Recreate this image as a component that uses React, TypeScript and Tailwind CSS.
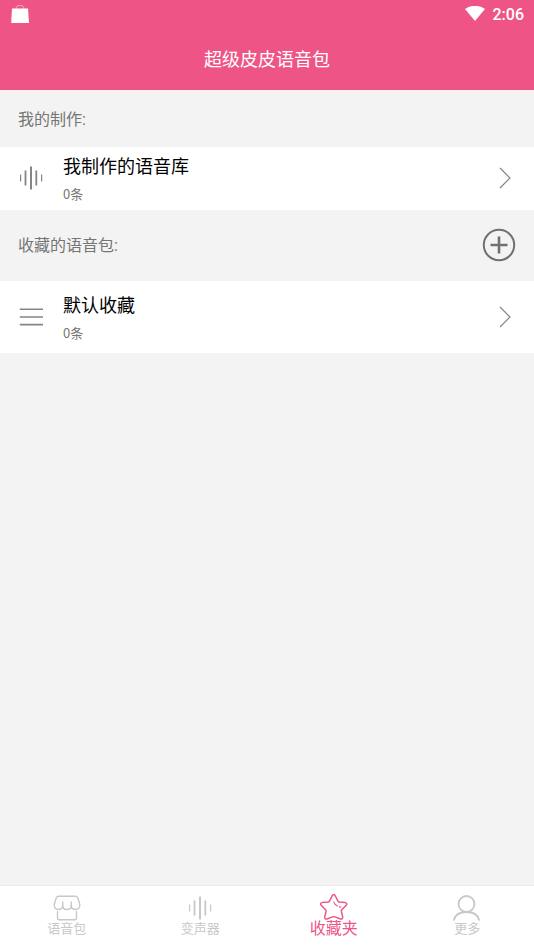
import type { ReactNode } from "react";

function WaveIcon({ className }: { className: string }) {
  return (
    <svg viewBox="0 0 24 24" className={className} fill="none" stroke="currentColor" aria-hidden="true">
      <path strokeWidth="1.2" d="M1.6 8.5v7M22.6 8.5v7" />
      <path strokeWidth="1.8" d="M6.5 4.5v15M17.3 4.5v15" />
      <path strokeWidth="2" d="M12 .5v23" />
    </svg>
  );
}

function ListIcon({ className }: { className: string }) {
  return (
    <svg viewBox="0 0 24 24" className={className} fill="none" stroke="currentColor" strokeWidth="1.6" aria-hidden="true">
      <path d="M.8 4.2H24M.8 12H24M.8 19.6H24" />
    </svg>
  );
}

function ChevronIcon() {
  return (
    <svg viewBox="0 0 12 22" className="h-[22px] w-3 text-[#858585]" fill="none" stroke="currentColor" strokeWidth="1.2" aria-hidden="true">
      <path d="M1 1l10 10L1 21" />
    </svg>
  );
}

function StoreIcon() {
  return (
    <svg viewBox="0 0 28 26" className="h-[26px] w-7" fill="none" stroke="currentColor" strokeWidth="1.4" strokeLinejoin="round" strokeLinecap="round" aria-hidden="true">
      <path d="M5.500 1.200h17c1.200 0 1.800.5 2.200 1.600l2 6.200c.7 2.800-1.200 5.500-4 5.500-2.500 0-4.400-1.600-4.400-4V7M9.700 7v3.500c0 2.400-1.900 4-4.400 4-2.800 0-4.700-2.700-4-5.500l2-6.200c.4-1.100 1-1.600 2.200-1.600" />
      <path d="M9.700 10.500c0 2.500 1.800 4 4.300 4s4.300-1.500 4.300-4M4.500 16.800v6.400c0 1 .5 1.500 1.500 1.500h16c1 0 1.500-.5 1.500-1.500v-6.400" />
    </svg>
  );
}

function StarIcon() {
  return (
    <svg viewBox="0 0 28 28" className="h-7 w-7" fill="none" stroke="currentColor" strokeWidth="1.5" strokeLinejoin="round" aria-hidden="true">
      <path d="M12.300 1.500Q13.700-.5 15.100 1.500L17.800 6.900Q18.200 7.800 19.200 8L25.300 8.600Q27.700 9.300 26.200 11.300L21.800 15.700Q21.200 16.500 21.400 17.500L22.700 22.900Q22.800 25.500 20.500 25L14.900 22.900Q13.700 22.500 12.500 22.900L6.900 25Q4.600 25.500 4.700 22.900L6 17.500Q6.200 16.500 5.600 15.700L1.200 11.300Q-.3 9.300 2.100 8.600L8.200 8Q9.200 7.800 9.600 6.900Z" />
      <path strokeWidth="1.2" strokeLinecap="round" d="M13.800 8.100C14.500 10.300 15.500 11.500 17.500 12M19.500 12.900l1.200.2" />
    </svg>
  );
}

function PersonIcon() {
  return (
    <svg viewBox="0 0 28 26" className="h-[26px] w-7" fill="none" stroke="currentColor" strokeWidth="1.800" strokeLinecap="round" aria-hidden="true">
      <circle cx="13.500" cy="9" r="8" />
      <path d="M1 24.800c1.200-4.600 5.200-7.800 12.500-7.800s11.300 3.200 12.500 7.800" />
    </svg>
  );
}

function StatusBar() {
  return (
    <div className="flex h-7 items-center justify-between pr-[10px] pl-[11px]">
      <svg viewBox="0 0 18 19" className="h-[19px] w-[18px]" aria-hidden="true">
        <path d="M1 3.500h16l1 14.500H.2z" fill="white" />
        <path d="M5 4C5 1.500 6.500.5 9 .5s4 1 4 3.500" fill="none" stroke="white" strokeOpacity=".5" strokeWidth="1" />
      </svg>
      <div className="flex items-center gap-2">
        <svg viewBox="0 0 20 16" className="h-4 w-5" fill="white" aria-hidden="true">
          <path d="M0 3C6-1.300 14-1.300 20 3L10 15z" />
        </svg>
        <span className="pt-px text-base leading-7 font-medium">2:06</span>
      </div>
    </div>
  );
}

function PackRow({ icon, title, count, className }: { icon: ReactNode; title: string; count: string; className: string }) {
  return (
    <button type="button" className={`flex w-full items-center bg-white pr-[23px] pb-px pl-[19px] text-left ${className}`}>
      {icon}
      <span className="ml-5 flex flex-1 flex-col pt-1">
        <span className="text-lg leading-7 text-black">{title}</span>
        <span className="font-['Noto_Sans_CJK_SC',sans-serif] text-[13px] leading-[26px] text-[#757575]">{count}</span>
      </span>
      <ChevronIcon />
    </button>
  );
}

function Tab({ icon, label, active = false }: { icon: ReactNode; label: string; active?: boolean }) {
  return (
    <button
      type="button"
      aria-current={active ? "page" : undefined}
      className={`flex flex-1 flex-col items-center pt-2 ${active ? "text-base text-[#ee5586]" : "text-[13px] text-[#c8c8c8]"}`}
    >
      <span className="flex h-7 items-center">{icon}</span>
      <span className="-mt-[3px] leading-5">{label}</span>
    </button>
  );
}

export default function App() {
  return (
    <div className="flex min-h-screen flex-col bg-[#f3f3f3] font-['Roboto','Noto_Sans_CJK_SC',sans-serif]">
      <header className="bg-[#ee5586] text-white">
        <StatusBar />
        <h1 className="pt-[18px] pb-4 text-center text-lg leading-7">超级皮皮语音包</h1>
      </header>

      <main className="flex-1">
        <section>
          <h2 className="px-[18px] pt-[18px] pb-[15px] text-base leading-6 text-[#757575]">我的制作:</h2>
          <PackRow
            className="h-[63px]"
            icon={<WaveIcon className="h-6 w-6 text-[#858585]" />}
            title="我制作的语音库"
            count="0条"
          />
        </section>
        <section>
          <div className="flex h-[71px] items-center justify-between px-[18px] pb-px">
            <h2 className="pt-0.5 text-base text-[#757575]">收藏的语音包:</h2>
            <button type="button" aria-label="新建收藏" className="text-[#707070]">
              <svg viewBox="0 0 34 34" className="h-[34px] w-[34px]" fill="none" stroke="currentColor" aria-hidden="true">
                <circle cx="17" cy="17" r="15.200" strokeWidth="2" />
                <path d="M17 8.500v17M8.500 17h17" strokeWidth="2.600" />
              </svg>
            </button>
          </div>
          <PackRow
            className="h-[72px]"
            icon={<ListIcon className="h-6 w-6 text-[#858585]" />}
            title="默认收藏"
            count="0条"
          />
        </section>
      </main>

      <nav className="flex h-16 border-t border-[#ececec] bg-white">
        <Tab icon={<StoreIcon />} label="语音包" />
        <Tab icon={<WaveIcon className="h-6 w-6" />} label="变声器" />
        <Tab icon={<StarIcon />} label="收藏夹" active />
        <Tab icon={<PersonIcon />} label="更多" />
      </nav>
    </div>
  );
}
